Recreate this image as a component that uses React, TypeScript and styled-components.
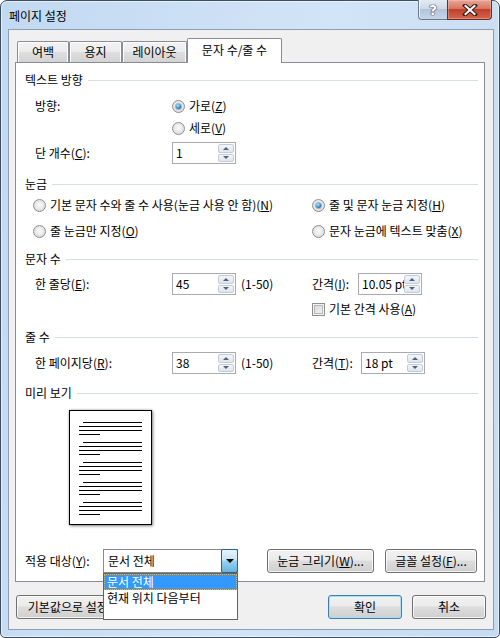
import React from 'react';
import styled, { createGlobalStyle, css } from 'styled-components';

const GlobalStyle = createGlobalStyle`
  html, body {
    margin: 0;
    padding: 0;
  }
  body {
    width: 500px;
    height: 638px;
    overflow: hidden;
    background: #fff;
    font-family: "Noto Sans CJK KR", "Noto Sans", sans-serif;
    font-size: 12px;
    line-height: 16px;
    color: #000;
  }
  u {
    text-underline-offset: 1px;
  }
`;

const Window = styled.div`
  box-sizing: border-box;
  width: 500px;
  height: 638px;
  border: 1px solid #3d4e61;
  border-radius: 7px 7px 5px 5px;
  background: linear-gradient(100deg, #c2d9f2 0%, #d2e4f7 55%, #c6dbf2 100%);
  box-shadow: inset 0 0 0 1px rgba(255, 255, 255, 0.55);
  padding: 0 5px 7px 7px;
  display: flex;
  flex-direction: column;
`;

const TitleBar = styled.div`
  height: 28px;
  display: flex;
  align-items: flex-start;
`;

const Title = styled.div`
  margin: 7px 0 0 1px;
  line-height: 16px;
`;

const CaptionButtons = styled.div`
  margin: -1px 2px 0 auto;
  display: flex;
`;

const HelpButton = styled.div`
  box-sizing: border-box;
  width: 29px;
  height: 20px;
  border: 1px solid #6c7a8c;
  border-top: none;
  border-right: none;
  border-radius: 0 0 0 4px;
  background: linear-gradient(#e3ebf4 0%, #cdd9e6 45%, #b3c4d8 50%, #c5d6ea 100%);
  box-shadow: inset 1px 0 0 rgba(255, 255, 255, 0.7);
  display: flex;
  align-items: center;
  justify-content: center;
  color: #fff;
  font-family: "DejaVu Sans", sans-serif;
  font-weight: bold;
  font-size: 14px;
  text-shadow: 0 0 1px #2c3b4d, 0 0 1px #2c3b4d, 0 0 1px #2c3b4d;
`;

const CloseButton = styled.div`
  box-sizing: border-box;
  width: 45px;
  height: 20px;
  border: 1px solid #6b2d22;
  border-top: none;
  border-radius: 0 0 4px 0;
  background: linear-gradient(#e8a898 0%, #d8755f 45%, #c2412b 50%, #d0664e 100%);
  box-shadow: inset 0 0 0 1px rgba(255, 210, 200, 0.35);
  display: flex;
  align-items: center;
  justify-content: center;
`;

const Client = styled.div`
  box-sizing: border-box;
  flex: 1;
  border: 1px solid #8d9db2;
  background: #f0f0f0;
  padding: 8px 7px 9px 6px;
  display: flex;
  flex-direction: column;
`;

const TabStrip = styled.div`
  height: 24px;
  padding-left: 2px;
  display: flex;
  align-items: flex-end;
  position: relative;
  z-index: 1;
`;

const Tab = styled.div<{ $w: number; $active?: boolean }>`
  box-sizing: border-box;
  width: ${p => p.$w}px;
  height: 21px;
  display: flex;
  align-items: center;
  justify-content: center;
  border: 1px solid #898c95;
  border-bottom: none;
  border-radius: 2px 2px 0 0;
  background: linear-gradient(#f3f3f3 0%, #ebebeb 50%, #dedede 51%, #d3d3d3 100%);
  box-shadow: inset 1px 1px 0 #fff, inset -1px 0 0 #fff;
  ${p =>
    p.$active &&
    css`
      height: 25px;
      margin-bottom: -1px;
      padding-bottom: 2px;
      background: #fff;
      box-shadow: none;
    `}
`;

const Panel = styled.div`
  box-sizing: border-box;
  width: 470px;
  height: 520px;
  border: 1px solid #898c95;
  background: #fff;
  padding: 8px 6px 8px 9px;
  display: flex;
  flex-direction: column;
`;

const SectionHeader = styled.div<{ $top?: number }>`
  height: 18px;
  margin-top: ${p => p.$top ?? 0}px;
  display: flex;
  align-items: center;
  white-space: nowrap;
`;

const Rule = styled.div`
  flex: 1;
  height: 1px;
  margin-left: 5px;
  background: #d5dfe5;
`;

const Row = styled.div<{ $top?: number; $indent?: number }>`
  height: 22px;
  margin-top: ${p => p.$top ?? 0}px;
  padding-left: ${p => p.$indent ?? 10}px;
  display: flex;
  align-items: center;
  white-space: nowrap;
`;

const Cell = styled.div<{ $w: number }>`
  width: ${p => p.$w}px;
  flex-shrink: 0;
  display: flex;
  align-items: center;
`;

const RadioCircle = styled.span<{ $checked?: boolean }>`
  box-sizing: border-box;
  width: 13px;
  height: 13px;
  margin-right: 4px;
  flex-shrink: 0;
  border-radius: 50%;
  border: 1px solid #8e8f8f;
  background: radial-gradient(circle at 50% 45%, #fbfbfb 0%, #e6e6e6 55%, #cbcbcb 100%);
  position: relative;
  &::after {
    content: '';
    display: ${p => (p.$checked ? 'block' : 'none')};
    position: absolute;
    left: 3px;
    top: 3px;
    width: 5px;
    height: 5px;
    border-radius: 50%;
    background: radial-gradient(circle at 40% 35%, #b5ebff 0%, #2a8ad0 55%, #0c3f78 100%);
    box-shadow: 0 0 0 1px rgba(20, 70, 120, 0.35);
  }
`;

const CheckSquare = styled.span`
  box-sizing: border-box;
  width: 13px;
  height: 13px;
  margin-right: 4px;
  flex-shrink: 0;
  border: 1px solid #8e8f8f;
  background: #f4f4f4;
  box-shadow: inset 0 0 0 1px #f4f4f4, inset 0 0 0 2px #b7b7b7;
  background-image: linear-gradient(135deg, #d6d6d6 0%, #f6f6f6 100%);
`;

const SpinBox = styled.div<{ $w?: number }>`
  box-sizing: border-box;
  width: ${p => p.$w ?? 64}px;
  height: 22px;
  border: 1px solid #a9abb0;
  background: #fff;
  display: flex;
  flex-shrink: 0;
`;

const SpinText = styled.span`
  flex: 1;
  min-width: 0;
  overflow: hidden;
  padding-left: 3px;
  line-height: 20px;
  white-space: nowrap;
`;

const SpinButtons = styled.div`
  width: 16px;
  padding: 1px 1px 1px 0;
  display: flex;
  flex-direction: column;
  gap: 1px;
`;

const SpinArrow = styled.div<{ $down?: boolean }>`
  flex: 1;
  border: 1px solid #c3cad4;
  border-radius: 2px;
  background: linear-gradient(#f4f6f9, #dfe5ec);
  display: flex;
  align-items: center;
  justify-content: center;
  &::after {
    content: '';
    border-left: 3px solid transparent;
    border-right: 3px solid transparent;
    ${p =>
      p.$down
        ? css`
            border-top: 3px solid #4d6185;
          `
        : css`
            border-bottom: 3px solid #4d6185;
          `}
  }
`;

const PreviewPage = styled.div`
  box-sizing: border-box;
  width: 83px;
  height: 115px;
  margin: 8px 0 0 44px;
  border: 1px solid #000;
  background: #fff;
  box-shadow: 1px 1px 3px rgba(0, 0, 0, 0.45), 0 0 2px rgba(0, 0, 0, 0.25);
`;

const ApplyRow = styled.div`
  height: 24px;
  margin-top: 24px;
  display: flex;
  align-items: center;
  white-space: nowrap;
`;

const Combo = styled.div`
  box-sizing: border-box;
  width: 135px;
  height: 24px;
  border: 1px solid #8a8a8a;
  background: #fff;
  display: flex;
  position: relative;
`;

const ComboText = styled.span`
  flex: 1;
  padding-left: 4px;
  line-height: 22px;
`;

const ComboArrow = styled.div`
  box-sizing: border-box;
  width: 17px;
  margin: -1px -1px -1px 0;
  border: 1px solid #2c628b;
  border-radius: 2px;
  background: linear-gradient(#e5f4fc 0%, #c4e5f6 45%, #98d1ef 50%, #68b3db 100%);
  display: flex;
  align-items: center;
  justify-content: center;
  &::after {
    content: '';
    border-left: 4px solid transparent;
    border-right: 4px solid transparent;
    border-top: 4px solid #000;
  }
`;

const DropList = styled.div`
  box-sizing: border-box;
  position: absolute;
  top: 23px;
  left: -1px;
  width: 135px;
  height: 47px;
  border: 1px solid #646464;
  background: #fff;
  z-index: 10;
`;

const DropItem = styled.div<{ $selected?: boolean }>`
  box-sizing: border-box;
  height: 16px;
  padding-left: 3px;
  line-height: 15px;
  ${p =>
    p.$selected &&
    css`
      background: #3399ff;
      color: #fff;
      outline: 1px dotted #e8b04a;
      outline-offset: -1px;
    `}
`;

const Button = styled.button<{ $w: number; $gap?: number; $default?: boolean }>`
  box-sizing: border-box;
  width: ${p => p.$w}px;
  height: 24px;
  margin-left: ${p => p.$gap ?? 0}px;
  padding: 0;
  border: 1px solid #707070;
  border-radius: 3px;
  background: linear-gradient(#f2f2f2 0%, #ebebeb 45%, #dddddd 50%, #cfcfcf 100%);
  box-shadow: inset 0 0 0 1px rgba(255, 255, 255, 0.75);
  font: inherit;
  color: #000;
  white-space: nowrap;
  flex-shrink: 0;
  ${p =>
    p.$default &&
    css`
      border-color: #3c7fb1;
      box-shadow: inset 0 0 0 1px #a7e1f7;
    `}
`;

const BottomBar = styled.div`
  height: 24px;
  margin-top: 13px;
  padding-left: 1px;
  display: flex;
  align-items: center;
`;

const Spacer = styled.div`
  flex: 1;
`;

const Spin: React.FC<{ value: string; w?: number }> = ({ value, w }) => (
  <SpinBox $w={w}>
    <SpinText>{value}</SpinText>
    <SpinButtons>
      <SpinArrow />
      <SpinArrow $down />
    </SpinButtons>
  </SpinBox>
);

const Radio: React.FC<{ checked?: boolean; children: React.ReactNode }> = ({ checked, children }) => (
  <>
    <RadioCircle $checked={checked} />
    <span>{children}</span>
  </>
);

const PreviewLines: React.FC = () => {
  const groups = [0, 1, 2, 3, 4];
  return (
    <svg width="81" height="113" viewBox="0 0 81 113">
      {groups.map(g => {
        const y = 11 + g * 20;
        return (
          <g key={g} fill="#000">
            <rect x="13" y={y} width="59" height="1" />
            <rect x="9" y={y + 4} width="63" height="1" />
            <rect x="9" y={y + 8} width="63" height="1" />
            <rect x="9" y={y + 12} width="21" height="1" />
          </g>
        );
      })}
    </svg>
  );
};

const App: React.FC = () => {
  return (
    <>
      <GlobalStyle />
      <Window>
        <TitleBar>
          <Title>페이지 설정</Title>
          <CaptionButtons>
            <HelpButton>?</HelpButton>
            <CloseButton>
              <svg width="16" height="12" viewBox="0 0 16 12">
                <path d="M3 1.5 L13 10.5 M13 1.5 L3 10.5" stroke="#3b1a14" strokeWidth="4" strokeLinecap="square" />
                <path d="M3.5 2 L12.5 10 M12.5 2 L3.5 10" stroke="#fff" strokeWidth="2" strokeLinecap="square" />
              </svg>
            </CloseButton>
          </CaptionButtons>
        </TitleBar>

        <Client>
          <TabStrip>
            <Tab $w={52}>여백</Tab>
            <Tab $w={53}>용지</Tab>
            <Tab $w={65}>레이아웃</Tab>
            <Tab $w={95} $active>
              문자 수/줄 수
            </Tab>
          </TabStrip>

          <Panel>
            <SectionHeader>
              텍스트 방향
              <Rule />
            </SectionHeader>
            <Row $top={6}>
              <Cell $w={137}>방향:</Cell>
              <Radio checked>
                가로(<u>Z</u>)
              </Radio>
            </Row>
            <Row>
              <Cell $w={137} />
              <Radio>
                세로(<u>V</u>)
              </Radio>
            </Row>
            <Row $top={3}>
              <Cell $w={137}>
                단 개수(<u>C</u>):
              </Cell>
              <Spin value="1" />
            </Row>

            <SectionHeader $top={11}>
              눈금
              <Rule />
            </SectionHeader>
            <Row $top={1} $indent={8}>
              <Cell $w={279}>
                <Radio>
                  기본 문자 수와 줄 수 사용(눈금 사용 안 함)(<u>N</u>)
                </Radio>
              </Cell>
              <Radio checked>
                줄 및 문자 눈금 지정(<u>H</u>)
              </Radio>
            </Row>
            <Row $top={4} $indent={8}>
              <Cell $w={279}>
                <Radio>
                  줄 눈금만 지정(<u>O</u>)
                </Radio>
              </Cell>
              <Radio>
                문자 눈금에 텍스트 맞춤(<u>X</u>)
              </Radio>
            </Row>

            <SectionHeader $top={8}>
              문자 수
              <Rule />
            </SectionHeader>
            <Row $top={5}>
              <Cell $w={137}>
                한 줄당(<u>E</u>):
              </Cell>
              <Spin value="45" />
              <Cell $w={71} style={{ paddingLeft: 5 }}>
                (1-50)
              </Cell>
              <Cell $w={46}>
                간격(<u>I</u>):
              </Cell>
              <Spin value="10.05 pt" />
            </Row>
            <Row $top={3} $indent={287}>
              <CheckSquare />
              <span>
                기본 간격 사용(<u>A</u>)
              </span>
            </Row>

            <SectionHeader $top={8}>
              줄 수
              <Rule />
            </SectionHeader>
            <Row $top={6}>
              <Cell $w={137}>
                한 페이지당(<u>R</u>):
              </Cell>
              <Spin value="38" />
              <Cell $w={71} style={{ paddingLeft: 5 }}>
                (1-50)
              </Cell>
              <Cell $w={49}>
                간격(<u>T</u>):
              </Cell>
              <Spin value="18 pt" />
            </Row>

            <SectionHeader $top={10}>
              미리 보기
              <Rule />
            </SectionHeader>
            <PreviewPage>
              <PreviewLines />
            </PreviewPage>

            <ApplyRow>
              <Cell $w={78}>
                적용 대상(<u>Y</u>):
              </Cell>
              <Combo>
                <ComboText>문서 전체</ComboText>
                <ComboArrow />
                <DropList>
                  <DropItem $selected>문서 전체</DropItem>
                  <DropItem>현재 위치 다음부터</DropItem>
                </DropList>
              </Combo>
              <Button $w={107} $gap={29}>
                눈금 그리기(<u>W</u>)...
              </Button>
              <Button $w={92} $gap={11}>
                글꼴 설정(<u>F</u>)...
              </Button>
            </ApplyRow>
          </Panel>

          <BottomBar>
            <Button $w={130}>
              기본값으로 설정(<u>D</u>)...
            </Button>
            <Spacer />
            <Button $w={74} $default>
              확인
            </Button>
            <Button $w={74} $gap={10}>
              취소
            </Button>
          </BottomBar>
        </Client>
      </Window>
    </>
  );
};

export default App;
